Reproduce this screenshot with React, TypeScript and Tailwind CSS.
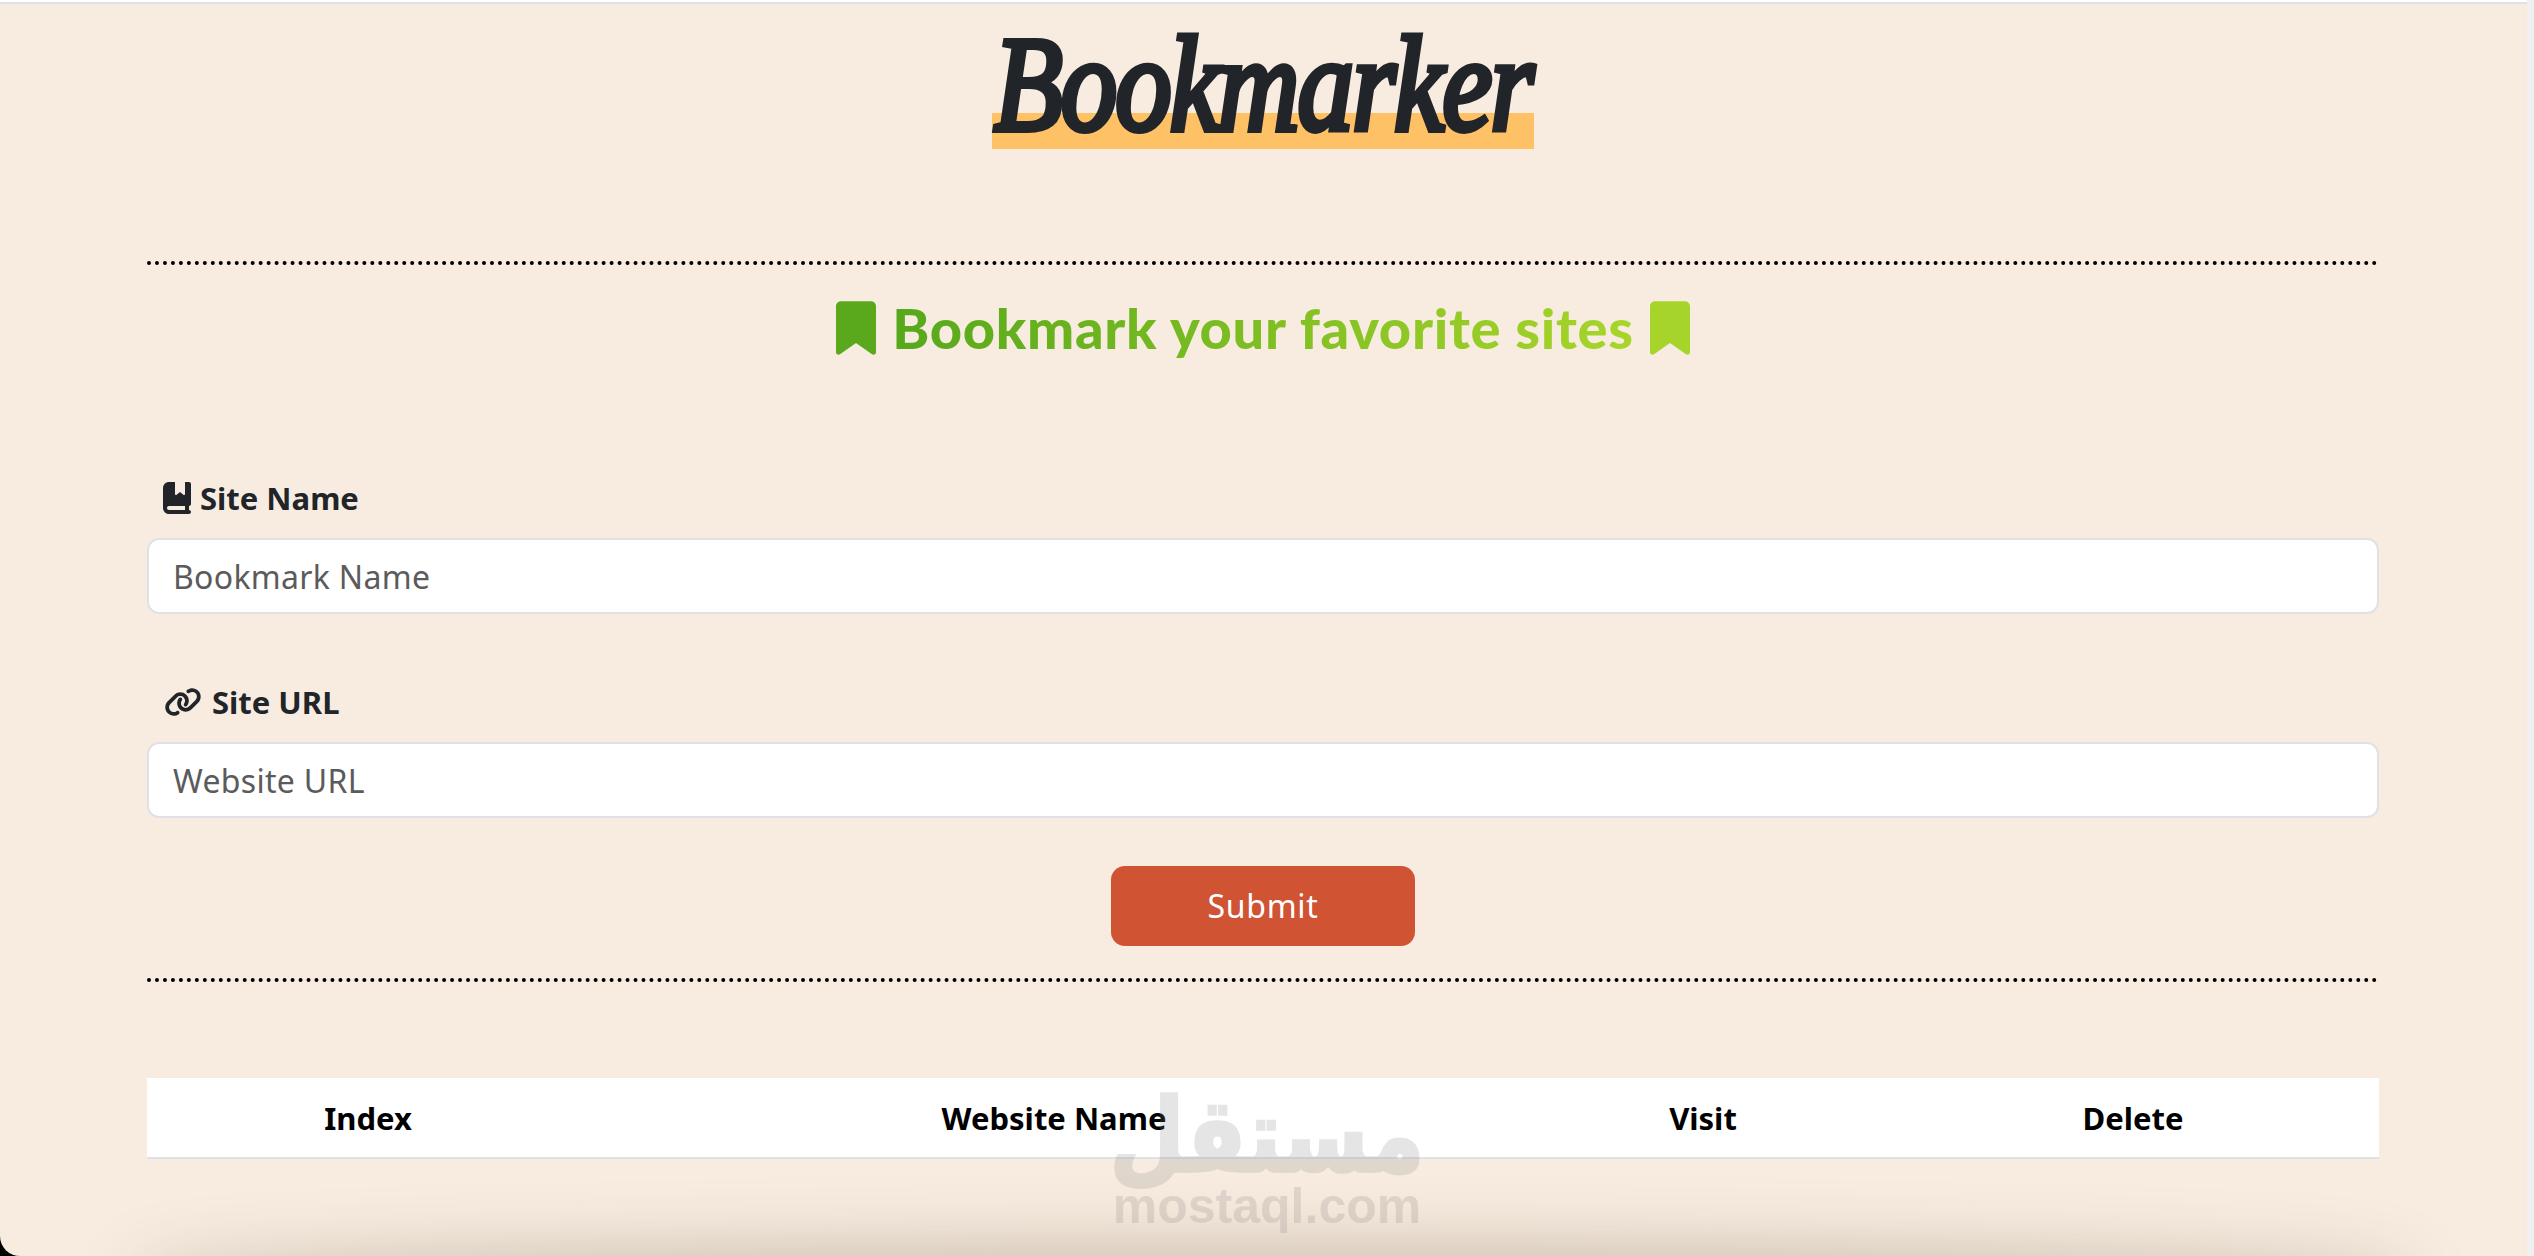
import { FaBookBookmark, FaBookmark, FaLink } from 'react-icons/fa6';

const bodyFont = "font-['Noto_Sans',sans-serif]";

function Field({
  label,
  placeholder,
  icon,
}: {
  label: string;
  placeholder: string;
  icon: React.ReactNode;
}) {
  return (
    <div>
      <label className="flex h-[42px] items-center pl-4 text-[31px] font-bold text-[#212529]">
        {icon}
        {label}
      </label>
      <input
        type="text"
        placeholder={placeholder}
        className="mt-[19px] block h-[76px] w-full rounded-xl border-2 border-[#dee2e6] bg-white px-[24px] text-[32px] tracking-[0.3px] text-[#212529] outline-none placeholder:text-[#5b5b5b]"
      />
    </div>
  );
}

export default function App() {
  return (
    <div className={`relative h-[1256px] w-full overflow-hidden bg-black pt-[2px] ${bodyFont}`}>
      <div className="absolute inset-x-0 top-0 h-[2px] bg-white" />
      <div className="absolute inset-y-0 right-0 w-[7px] bg-[#f0f0f0]" />

      <main className="relative mr-[7px] h-[1254px] overflow-hidden rounded-bl-[20px] border-t-2 border-[#dee2e6] bg-[#f8ece0]">
        <div className="mx-[147px] w-[2232px]">
          {/* Header */}
          <div className="flex h-[145px] justify-center">
            <h1 className="h-[145px] w-[542px] whitespace-nowrap bg-[linear-gradient(#ffc166,#ffc166)] bg-[length:100%_36px] bg-bottom bg-no-repeat text-center font-['Liberation_Serif',serif] text-[113px] leading-[145px] italic tracking-[-2px] text-[#212529] [-webkit-text-stroke:5px_#212529] [stroke-linejoin:round]">
              <span className="inline-block origin-bottom translate-y-[22px] scale-y-[1.2]">Bookmarker</span>
            </h1>
          </div>

          <hr className="mt-[112px] border-0 border-t-4 border-dotted border-black" />

          {/* Title */}
          <h2 className="mt-[28px] flex h-[70px] items-center justify-center">
            <FaBookmark className="h-[56px] w-[40px] text-[#5aa81b]" />
            <span className="mx-[16px] bg-[linear-gradient(90deg,#56a81b,#a8d52a)] bg-clip-text font-['Lato',sans-serif] text-[56px] font-black tracking-[0.7px] text-transparent">
              Bookmark your favorite sites
            </span>
            <FaBookmark className="h-[56px] w-[40px] text-[#a6d42a]" />
          </h2>

          {/* Form */}
          <div className="mt-[114px]">
            <Field
              label="Site Name"
              placeholder="Bookmark Name"
              icon={<FaBookBookmark className="mr-[9px] h-[32px] w-[28px]" />}
            />
          </div>
          <div className="mt-[67px]">
            <Field
              label="Site URL"
              placeholder="Website URL"
              icon={<FaLink className="mr-[9px] h-[30px] w-[40px]" />}
            />
          </div>

          <div className="mt-[48px] flex justify-center">
            <button className="h-[80px] w-[304px] rounded-[14px] bg-[#d05333] text-[32px] tracking-[0.7px] text-white">
              Submit
            </button>
          </div>

          <hr className="mt-[32px] border-0 border-t-4 border-dotted border-black" />

          {/* Table */}
          <table className="mt-[96px] w-full table-fixed border-b-2 border-[#dee2e6] bg-white">
            <thead>
              <tr className="h-[80px] text-center text-[31px] font-bold text-black">
                <th className="w-[442px] pt-[2px]">Index</th>
                <th className="w-[930px] pt-[2px]">Website Name</th>
                <th className="w-[368px] pt-[2px]">Visit</th>
                <th className="w-[492px] pt-[2px]">Delete</th>
              </tr>
            </thead>
          </table>
        </div>

        {/* Soft shadow rising from the bottom edge */}
        <div className="absolute top-[1275px] right-[150px] left-[170px] h-[20px] rounded-[50%] shadow-[0_0_70px_30px_rgba(60,40,20,0.25)]" />

        {/* Watermark */}
        <div className="absolute top-[1086px] left-[1115px] flex w-[304px] flex-col items-center text-[#808080] opacity-20">
          <span dir="rtl" className="inline-block scale-y-[1.18] font-['DejaVu_Sans',sans-serif] text-[86px] leading-[92px] font-bold [-webkit-text-stroke:3px_#808080]">
            مستقل
          </span>
          <span className="font-['Liberation_Sans',sans-serif] text-[50px] leading-[48px] font-bold">
            mostaql.com
          </span>
        </div>
      </main>
    </div>
  );
}
